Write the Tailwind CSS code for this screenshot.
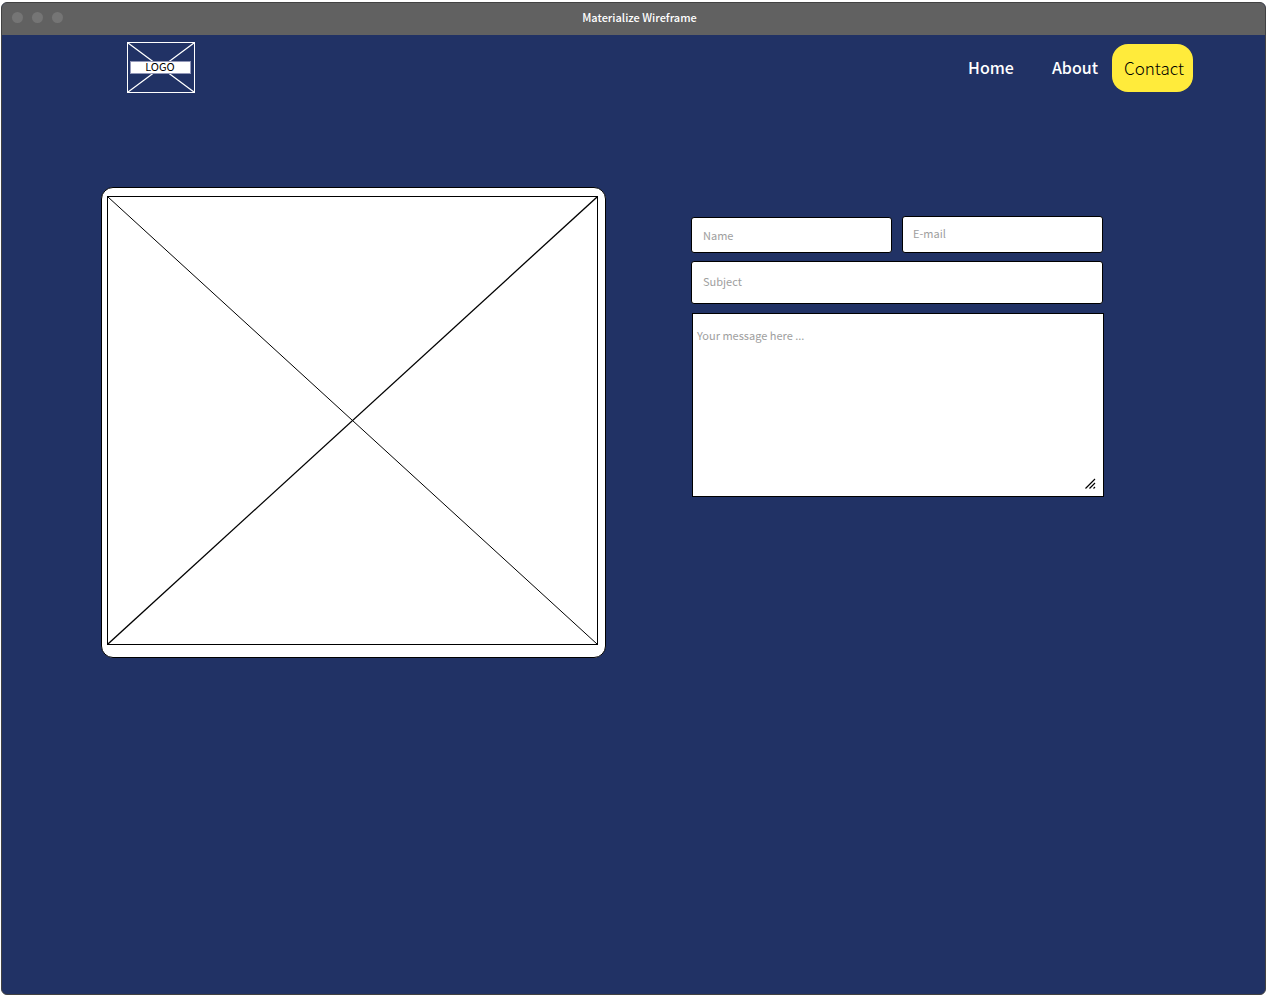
<!DOCTYPE html>
<html lang="en">
<head>
<meta charset="utf-8">
<meta name="viewport" content="width=device-width, initial-scale=1">
<title>Materialize Wireframe</title>
<script src="https://cdn.jsdelivr.net/npm/@tailwindcss/browser@4"></script>
</head>
<body class="flex min-h-screen bg-white pt-[2px] pr-[3px] pb-[6px] pl-px font-['Noto_Sans_CJK_SC','Noto_Sans',sans-serif]">
<div class="flex flex-1 flex-col overflow-hidden rounded-md border border-[#424242] bg-[#213265]">
  <!-- Window title bar -->
  <div class="grid h-8 grid-cols-[1fr_auto_1fr] items-center bg-[#616161] px-[10px] pb-1">
    <div class="flex gap-[9px]">
      <span class="size-[11px] rounded-full bg-[#757575]"></span>
      <span class="size-[11px] rounded-full bg-[#757575]"></span>
      <span class="size-[11px] rounded-full bg-[#757575]"></span>
    </div>
    <h1 class="pl-3 text-[11px] leading-4 font-medium text-white">Materialize Wireframe</h1>
  </div>

  <header class="flex items-start justify-between pt-[7px] pr-[72px] pl-[125px]">
    <a href="#" class="relative flex h-[51px] w-[68px] items-center justify-center border border-white pr-[2px]">
      <svg class="absolute inset-0 size-full" viewBox="0 0 66 49" preserveAspectRatio="none" stroke="#fff" stroke-width="1.3" aria-hidden="true"><path d="M0 0L66 49M66 0L0 49"/></svg>
      <span class="relative flex h-[13px] w-[61px] items-center justify-center border border-[#9297b8] bg-white pb-[3px] text-[11px] leading-3 font-normal text-black">LOGO</span>
    </a>
    <nav class="flex items-center pt-[2px] text-base leading-6 text-white">
      <a href="#" class="mr-[38px] pb-[2px] font-medium">Home</a>
      <a href="#" class="mr-[14px] pb-[2px] font-medium">About</a>
      <a href="#" class="flex h-12 w-[81px] items-center justify-center rounded-2xl bg-[#ffeb3b] pb-px pl-[3px] text-[17px] font-light text-black">Contact</a>
    </nav>
  </header>

  <main class="grid grid-cols-[505fr_413fr] items-start gap-[85px] pt-[94px] pr-[161px] pl-[99px]">
    <!-- Image placeholder -->
    <div class="rounded-xl border border-black bg-white pt-2 pr-[7px] pb-3 pl-[5px]">
      <svg class="block h-[449px] w-full border border-black" viewBox="0 0 489 447" preserveAspectRatio="none" stroke="#000" role="img" aria-label="Image placeholder"><path d="M0 0L489 447"/><path d="M489 0L0 447" stroke-width="1.3"/></svg>
    </div>

    <form class="pt-[29px]">
      <div class="grid grid-cols-2 items-end gap-[10px] pr-px">
        <input type="text" aria-label="Name" placeholder="Name" class="h-9 w-full min-w-0 rounded-[3px] border border-black bg-white px-[11px] text-[11px] text-black placeholder:text-[#9e9e9e]">
        <input type="email" aria-label="E-mail" placeholder="E-mail" class="h-[37px] w-full min-w-0 rounded-[3px] border border-black bg-white px-[10px] pb-[3px] text-[11px] text-black placeholder:text-[#9e9e9e]">
      </div>
      <div class="mt-2 pr-px">
        <input type="text" aria-label="Subject" placeholder="Subject" class="block h-[43px] w-full rounded-[3px] border border-black bg-white px-[11px] pb-[3px] text-[11px] text-black placeholder:text-[#9e9e9e]">
      </div>
      <div class="relative mt-[9px] pl-px">
        <textarea aria-label="Your message" placeholder="Your message here ..." class="block h-[184px] w-full resize-none border border-black bg-white px-1 py-[13px] text-[11px] leading-4 text-black placeholder:text-[#9e9e9e]"></textarea>
        <svg class="pointer-events-none absolute right-2 bottom-2 size-[11px]" viewBox="0 0 11 11" stroke="#000" stroke-width="1.2" aria-hidden="true"><path d="M.5 10.500L10 1M4.500 10.500L10 5M8.500 10.500L10 9"/></svg>
      </div>
    </form>
  </main>
</div>
</body>
</html>
